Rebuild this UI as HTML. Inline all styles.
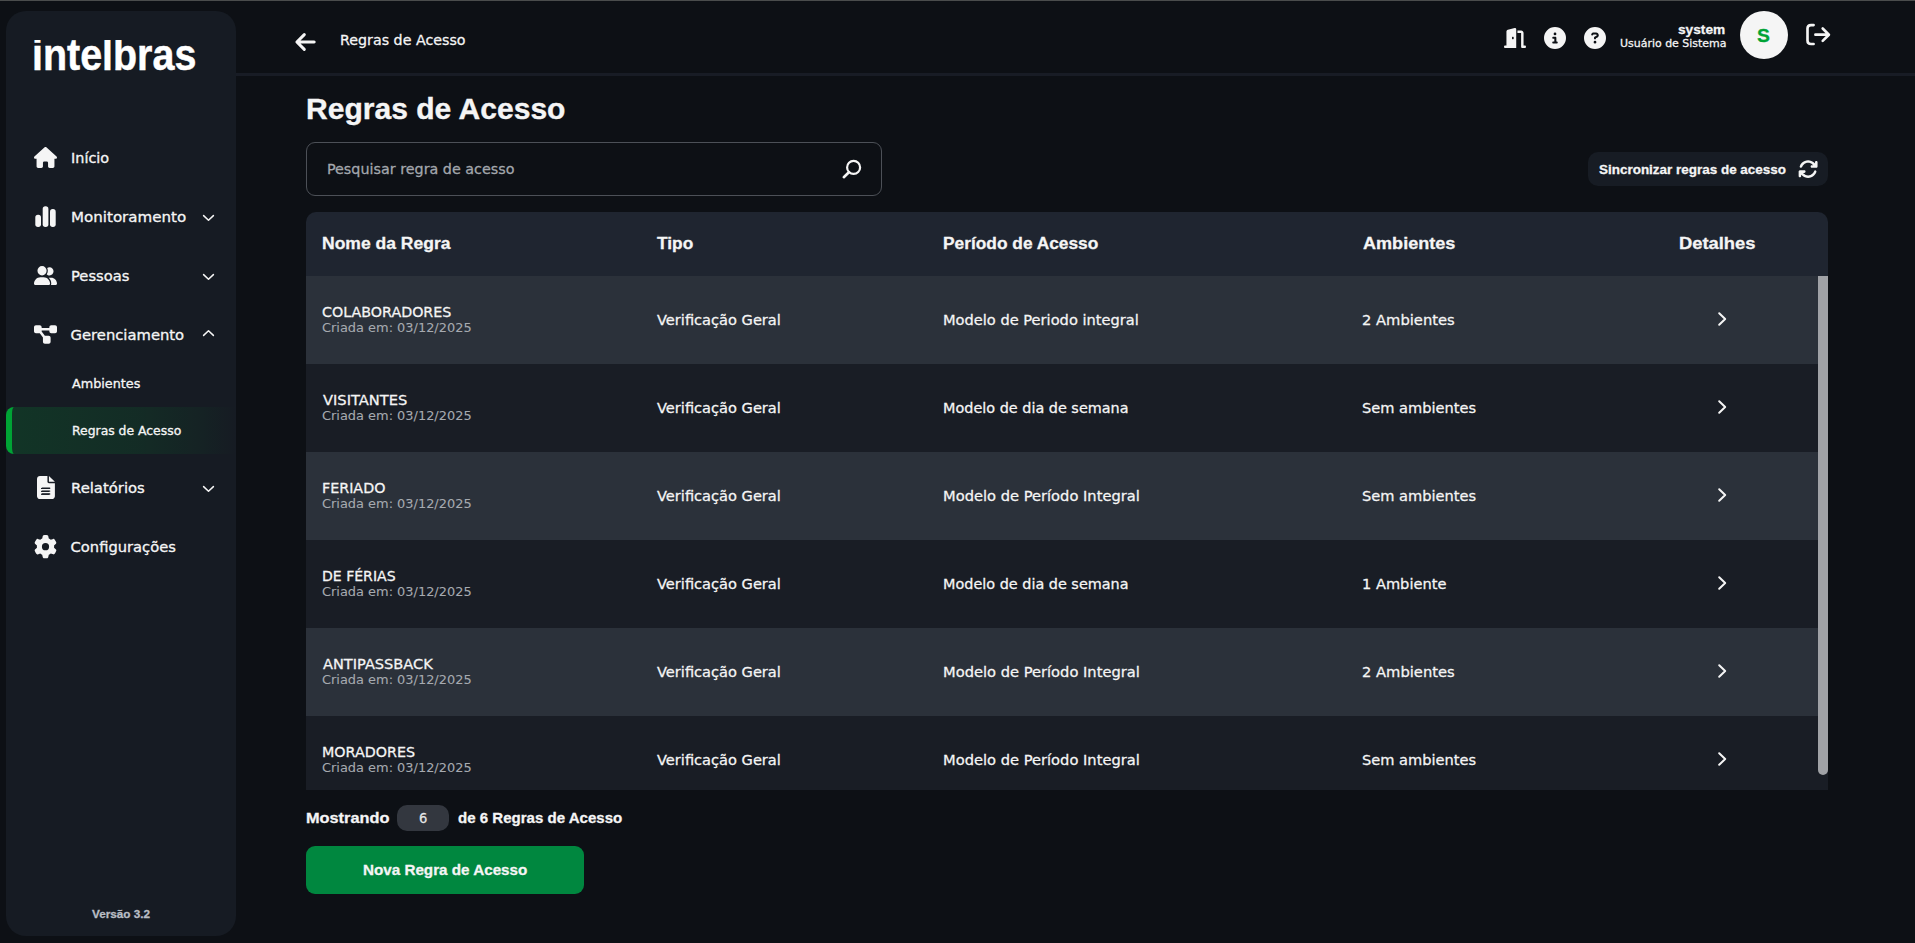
<!DOCTYPE html>
<html lang="pt-BR">
<head>
<meta charset="utf-8">
<title>Regras de Acesso</title>
<style>
html,body{margin:0;padding:0}
body{width:1915px;height:943px;overflow:hidden;background:#0d1015;color:#fff;position:relative;font-family:"DejaVu Sans","Liberation Sans",sans-serif}
.abs{position:absolute}
svg{position:absolute;overflow:visible}
#topline{left:0;top:0;width:1915px;height:1px;background:#4a4c4c}
#sidebar{left:6px;top:11px;width:230px;height:925px;border-radius:20px;background:#161b23}
#active{left:6px;top:407px;width:224px;height:47px;border-left:6px solid #00a335;border-radius:8px 0 0 8px;background:linear-gradient(90deg,rgba(0,163,53,.19) 0,rgba(0,163,53,.125) 55%,rgba(0,163,53,.055) 84%,rgba(0,163,53,0) 100%);background-clip:padding-box}
#hline{left:236px;top:73px;width:1679px;height:3px;background:#181c25}
#search{left:306px;top:142px;width:574px;height:52px;border:1px solid #4c5057;border-radius:9px}
#sync{left:1588px;top:152px;width:240px;height:34px;border-radius:10px;background:#171c24}
#thead{left:306px;top:212px;width:1522px;height:64px;background:#1f2530;border-radius:10px 10px 0 0}
.row{left:306px;width:1522px;height:88px}
.odd{background:#2b313a}
.even{background:#191d25}
#thumb{left:1818px;top:276px;width:10px;height:499px;background:#a0a2a6;border-radius:0 0 5px 5px}
#count{left:397px;top:805px;width:52px;height:26px;border-radius:10px;background:#33373f}
#btn{left:306px;top:846px;width:278px;height:48px;border-radius:9px;background:#00873f}
#avatar{left:1740px;top:11px;width:48px;height:48px;border-radius:50%;background:#f5f5f5}
.t{position:absolute;white-space:nowrap;line-height:1;margin:0;padding:0;font-weight:400;transform-origin:0 0}
.fd{font-family:"DejaVu Sans","Liberation Sans",sans-serif;-webkit-text-stroke:.27px currentColor}
.fl{font-family:"Liberation Sans",sans-serif;-webkit-text-stroke:.28px currentColor}
.m{-webkit-text-stroke:.32px currentColor}
</style>
</head>
<body>
<div id="topline" class="abs"></div>
<aside>
<div id="sidebar" class="abs"></div>
<div class="t fl" style="left:32.27px;top:32px;font-size:45px;font-weight:700;transform:scaleX(0.8760);-webkit-text-stroke:.5px currentColor;clip-path:inset(8px -5px -5px -5px);">intelbras</div>
<nav>
<div id="active" class="abs"></div>
<svg style="left:33.8px;top:146.8px" width="23" height="21" viewBox="0 0 576 512" preserveAspectRatio="none"><path fill="#f5f5f5" d="M575.8 255.5c0 18-15 32.1-32 32.1l-32 0 .7 160.2c0 2.700-.2 5.400-.5 8.100l0 16.200c0 22.100-17.900 40-40 40l-16 0c-1.100 0-2.200 0-3.300-.1c-1.400 .1-2.800 .1-4.200 .1L416 512l-24 0c-22.100 0-40-17.900-40-40l0-24 0-64c0-17.700-14.300-32-32-32l-64 0c-17.700 0-32 14.300-32 32l0 64 0 24c0 22.100-17.900 40-40 40l-24 0-31.900 0c-1.500 0-3-.1-4.500-.2c-1.200 .1-2.400 .2-3.600 .2l-16 0c-22.100 0-40-17.900-40-40l0-112c0-.9 0-1.900 .1-2.800l0-69.700-32 0c-18 0-32-14-32-32.100c0-9 3-17 10-24L266.400 8c7-7 15-8 22-8s15 2 21 7L564.800 231.500c8 7 12 15 11 24z"/></svg>
<svg style="left:35px;top:206px" width="21" height="21" viewBox="0 0 21 21" ><g fill="#f5f5f5"><rect x="0.300" y="8.700" width="5.700" height="12.200" rx="2.700"/><rect x="7.700" y="0.200" width="5.700" height="20.700" rx="2.700"/><rect x="15" y="3.100" width="5.700" height="17.800" rx="2.700"/></g></svg>
<svg style="left:33.8px;top:266px" width="23" height="18.9" viewBox="0 0 640 512" preserveAspectRatio="none"><path fill="#f5f5f5" d="M96 128a128 128 0 1 1 256 0A128 128 0 1 1 96 128zM0 482.300C0 383.800 79.800 304 178.300 304l91.400 0C368.200 304 448 383.800 448 482.300c0 16.400-13.300 29.700-29.700 29.700L29.700 512C13.300 512 0 498.700 0 482.300zM609.300 512l-137.800 0c5.400-9.400 8.600-20.300 8.600-32l0-8c0-60.700-27.100-115.200-69.800-151.800c2.400-.1 4.700-.2 7.100-.2l61.400 0C567.800 320 640 392.200 640 481.300c0 17-13.800 30.700-30.700 30.700zM432 256c-31 0-59-12.600-79.300-32.900C372.400 196.500 384 163.600 384 128c0-26.800-6.600-52.100-18.300-74.300C384.300 40.100 407.200 32 432 32c61.900 0 112 50.100 112 112s-50.100 112-112 112z"/></svg>
<svg style="left:33.8px;top:323.7px" width="23" height="21" viewBox="0 0 576 512" preserveAspectRatio="none"><path fill="#f5f5f5" d="M0 80C0 53.500 21.500 32 48 32l96 0c26.500 0 48 21.500 48 48l0 16 192 0 0-16c0-26.500 21.500-48 48-48l96 0c26.500 0 48 21.500 48 48l0 96c0 26.500-21.500 48-48 48l-96 0c-26.500 0-48-21.500-48-48l0-16-192 0 0 16c0 1.700-.1 3.400-.3 5L272 288l96 0c26.500 0 48 21.500 48 48l0 96c0 26.500-21.500 48-48 48l-96 0c-26.500 0-48-21.500-48-48l0-96c0-1.700 .1-3.400 .3-5L144 224l-96 0c-26.500 0-48-21.500-48-48L0 80z"/></svg>
<svg style="left:36.8px;top:476px" width="17.9" height="23" viewBox="0 0 384 512" preserveAspectRatio="none"><path fill="#f5f5f5" d="M64 0C28.700 0 0 28.700 0 64L0 448c0 35.300 28.700 64 64 64l256 0c35.300 0 64-28.700 64-64l0-288-128 0c-17.700 0-32-14.300-32-32L224 0 64 0zM256 0l0 128 128 0L256 0zM112 256l160 0c8.800 0 16 7.200 16 16s-7.200 16-16 16l-160 0c-8.800 0-16-7.200-16-16s7.200-16 16-16zm0 64l160 0c8.800 0 16 7.200 16 16s-7.200 16-16 16l-160 0c-8.800 0-16-7.200-16-16s7.200-16 16-16zm0 64l160 0c8.800 0 16 7.200 16 16s-7.200 16-16 16l-160 0c-8.800 0-16-7.200-16-16s7.200-16 16-16z"/></svg>
<div class="abs" style="left:41.400px;top:487.500px;width:8px;height:1.700px;background:#161b23;box-shadow:0 2.900px 0 #161b23,0 5.800px 0 #161b23"></div>
<svg style="left:34px;top:534.9px" width="23" height="23.3" viewBox="0 0 512 512" preserveAspectRatio="none"><path fill="#f5f5f5" d="M495.900 166.600c3.200 8.700 .5 18.400-6.400 24.600l-43.300 39.400c1.100 8.300 1.700 16.800 1.700 25.400s-.6 17.100-1.700 25.400l43.300 39.400c6.900 6.200 9.600 15.900 6.400 24.600c-4.400 11.900-9.700 23.300-15.800 34.300l-4.700 8.100c-6.600 11-14 21.400-22.100 31.200c-5.900 7.200-15.700 9.600-24.500 6.800l-55.700-17.700c-13.400 10.300-28.200 18.900-44 25.400l-12.500 57.100c-2 9.100-9 16.300-18.200 17.800c-13.800 2.300-28 3.500-42.500 3.500s-28.700-1.200-42.500-3.500c-9.200-1.500-16.200-8.700-18.200-17.800l-12.500-57.100c-15.800-6.500-30.600-15.100-44-25.400L83.100 425.900c-8.800 2.800-18.600 .3-24.500-6.800c-8.100-9.800-15.500-20.200-22.100-31.200l-4.700-8.100c-6.100-11-11.400-22.400-15.800-34.300c-3.200-8.700-.5-18.400 6.400-24.600l43.300-39.400C64.600 273.100 64 264.600 64 256s.6-17.100 1.700-25.400L22.400 191.200c-6.900-6.200-9.600-15.900-6.400-24.600c4.400-11.900 9.700-23.300 15.800-34.300l4.700-8.100c6.600-11 14-21.400 22.100-31.200c5.900-7.200 15.700-9.600 24.500-6.800l55.700 17.700c13.400-10.300 28.200-18.900 44-25.400l12.500-57.100c2-9.100 9-16.300 18.200-17.800C227.300 1.200 241.500 0 256 0s28.700 1.200 42.500 3.500c9.200 1.500 16.200 8.700 18.200 17.800l12.500 57.100c15.800 6.500 30.600 15.100 44 25.400l55.700-17.700c8.800-2.800 18.600-.3 24.500 6.800c8.100 9.800 15.500 20.200 22.100 31.200l4.700 8.100c6.100 11 11.400 22.400 15.800 34.300zM256 336a80 80 0 1 0 0-160 80 80 0 1 0 0 160z"/></svg>
<svg style="left:202.5px;top:215.1px" width="11" height="6" viewBox="0 0 11 6" ><path d="M0.600 0.600 L5.500 5.300 L10.400 0.600" fill="none" stroke="#f5f5f5" stroke-width="1.500" stroke-linecap="round" stroke-linejoin="round"/></svg>
<svg style="left:202.5px;top:274.1px" width="11" height="6" viewBox="0 0 11 6" ><path d="M0.600 0.600 L5.500 5.300 L10.400 0.600" fill="none" stroke="#f5f5f5" stroke-width="1.500" stroke-linecap="round" stroke-linejoin="round"/></svg>
<svg style="left:202.5px;top:330.4px" width="11" height="6" viewBox="0 0 11 6" ><path d="M0.600 5.400 L5.500 0.700 L10.400 5.400" fill="none" stroke="#f5f5f5" stroke-width="1.500" stroke-linecap="round" stroke-linejoin="round"/></svg>
<svg style="left:202.5px;top:485.9px" width="11" height="6" viewBox="0 0 11 6" ><path d="M0.600 0.600 L5.500 5.300 L10.400 0.600" fill="none" stroke="#f5f5f5" stroke-width="1.500" stroke-linecap="round" stroke-linejoin="round"/></svg>
<span class="t fd m" style="left:71.11px;top:151px;font-size:14.5px;color:#f5f5f5;transform:scaleX(0.9946);">Início</span>
<span class="t fd m" style="left:71.09px;top:210px;font-size:14.9px;color:#f5f5f5;transform:scaleX(1.0125);">Monitoramento</span>
<span class="t fd m" style="left:71.09px;top:269px;font-size:14.6px;color:#f5f5f5;transform:scaleX(1.0071);">Pessoas</span>
<span class="t fd m" style="left:70.60px;top:328px;font-size:14.75px;color:#f5f5f5;">Gerenciamento</span>
<span class="t fd m" style="left:72.10px;top:378px;font-size:12.9px;color:#f5f5f5;transform:scaleX(0.9913);">Ambientes</span>
<span class="t fd m" style="left:72.00px;top:425px;font-size:12.4px;color:#f5f5f5;">Regras de Acesso</span>
<span class="t fd m" style="left:71.10px;top:481px;font-size:14.75px;color:#f5f5f5;transform:scaleX(1.0042);">Relatórios</span>
<span class="t fd m" style="left:70.60px;top:540px;font-size:14.7px;color:#f5f5f5;">Configurações</span>
</nav>
<div class="t fl" style="left:92.20px;top:909px;font-size:11px;font-weight:700;color:#b9bdc4;transform:scaleX(1.0667);">Versão 3.2</div>
</aside>
<header>
<div id="hline" class="abs"></div>
<svg style="left:294.9px;top:32.8px" width="20.7" height="18" viewBox="0 0 20.7 18" ><path d="M9.300 1.600 L1.900 9 L9.300 16.400 M2.200 9 L19.200 9" fill="none" stroke="#f5f5f5" stroke-width="3" stroke-linecap="round" stroke-linejoin="round"/></svg>
<span class="t fd" style="left:340.10px;top:33px;font-size:14.18px;color:#f5f5f5;transform:scaleX(1.0049);">Regras de Acesso</span>
<svg style="left:1503.9px;top:27.8px" width="22" height="20" viewBox="0 0 576 512" preserveAspectRatio="none"><path fill="#f5f5f5" d="M320 32c0-9.900-4.500-19.200-12.300-25.200S289.800-1.400 280.200 1l-179.900 45C79 51.300 64 70.500 64 92.500L64 448l-32 0c-17.700 0-32 14.300-32 32s14.300 32 32 32l64 0 192 0 32 0 0-32 0-448zM256 256c0 17.700-10.700 32-24 32s-24-14.300-24-32s10.700-32 24-32s24 14.300 24 32zm96-128l96 0 0 352c0 17.700 14.300 32 32 32l64 0c17.700 0 32-14.300 32-32s-14.300-32-32-32l-32 0 0-320c0-35.300-28.700-64-64-64l-96 0 0 64z"/></svg>
<svg style="left:1544.1px;top:26.9px" width="22" height="22" viewBox="0 0 512 512" ><path fill="#f5f5f5" d="M256 512A256 256 0 1 0 256 0a256 256 0 1 0 0 512zM216 336l24 0 0-64-24 0c-13.300 0-24-10.700-24-24s10.700-24 24-24l48 0c13.300 0 24 10.700 24 24l0 88 8 0c13.300 0 24 10.700 24 24s-10.700 24-24 24l-80 0c-13.300 0-24-10.700-24-24s10.700-24 24-24zm40-208a32 32 0 1 1 0 64 32 32 0 1 1 0-64z"/></svg>
<svg style="left:1584px;top:26.9px" width="22" height="22" viewBox="0 0 512 512" ><path fill="#f5f5f5" d="M256 512A256 256 0 1 0 256 0a256 256 0 1 0 0 512zM169.800 165.300c7.900-22.300 29.100-37.300 52.800-37.300l58.300 0c34.900 0 63.100 28.300 63.100 63.100c0 22.600-12.100 43.500-31.700 54.800L280 264.400c-.2 13-10.900 23.600-24 23.600c-13.300 0-24-10.700-24-24l0-13.500c0-8.600 4.600-16.500 12.100-20.800l44.300-25.400c4.700-2.700 7.600-7.700 7.600-13.100c0-8.400-6.800-15.100-15.100-15.100l-58.300 0c-3.400 0-6.400 2.100-7.500 5.300l-.4 1.200c-4.400 12.500-18.200 19-30.600 14.600s-19-18.200-14.600-30.600l.4-1.200zM224 352a32 32 0 1 1 64 0 32 32 0 1 1 -64 0z"/></svg>
<span class="t fl" style="left:1678.30px;top:23px;font-size:13.4px;font-weight:700;color:#f5f5f5;transform:scaleX(1.0217);">system</span>
<span class="t fd" style="left:1619.59px;top:39px;font-size:10.9px;color:#f5f5f5;transform:scaleX(1.0067);">Usuário de Sistema</span>
<div id="avatar" class="abs"></div>
<span class="t fl" style="left:1757.48px;top:26px;font-size:19px;font-weight:700;color:#00a335;transform:scaleX(1.0182);">S</span>
<svg style="left:1806px;top:24.4px" width="24" height="21.3" viewBox="0 0 24 21.3" ><path d="M7.600 1.100 L5 1.100 Q1.500 1.100 1.500 4.600 L1.500 16.500 Q1.500 20 5 20 L7.600 20 M9.400 10.700 L22.300 10.700 M16.700 4.500 L22.900 10.700 L16.700 16.900" fill="none" stroke="#f5f5f5" stroke-width="2.650" stroke-linecap="round" stroke-linejoin="round"/></svg>
</header>
<main>
<h1 class="t fl" style="left:306.43px;top:95px;font-size:29px;font-weight:700;color:#f5f5f5;transform:scaleX(1.0363);-webkit-text-stroke:.35px currentColor;">Regras de Acesso</h1>
<div id="search" class="abs"></div>
<span class="t fd" style="left:326.90px;top:162px;font-size:14.34px;color:#a3a7ad;">Pesquisar regra de acesso</span>
<svg style="left:842px;top:159px" width="20" height="20" viewBox="0 0 20 20" ><circle cx="11.600" cy="8.400" r="6.500" fill="none" stroke="#f5f5f5" stroke-width="2.200"/><path d="M6.900 13.200 L1.800 18.200" stroke="#f5f5f5" stroke-width="2.600" stroke-linecap="round"/></svg>
<div id="sync" class="abs"></div>
<span class="t fl" style="left:1598.60px;top:164px;font-size:12.8px;font-weight:700;color:#f5f5f5;transform:scaleX(1.0517);">Sincronizar regras de acesso</span>
<svg style="left:1797.9px;top:158.9px" width="20.2" height="20.2" viewBox="0 0 512 512" ><path fill="#f5f5f5" d="M105.100 202.600c7.700-21.800 20.200-42.300 37.800-59.800c62.500-62.500 163.800-62.500 226.300 0L386.300 160 352 160c-17.700 0-32 14.300-32 32s14.300 32 32 32l111.500 0c0 0 0 0 0 0l.4 0c17.700 0 32-14.300 32-32l0-112c0-17.700-14.300-32-32-32s-32 14.300-32 32l0 35.200L414.400 97.600c-87.500-87.500-229.300-87.500-316.800 0C73.200 122 55.600 150.700 44.800 181.400c-5.900 16.700 2.900 34.900 19.500 40.800s34.900-2.900 40.800-19.500zM39 289.300c-5 1.500-9.800 4.200-13.700 8.200c-4 4-6.700 8.800-8.100 14c-.3 1.200-.6 2.500-.8 3.800c-.3 1.700-.4 3.400-.4 5.100L16 432c0 17.700 14.300 32 32 32s32-14.300 32-32l0-35.100 17.600 17.500c0 0 0 0 0 0c87.500 87.400 229.300 87.400 316.700 0c24.400-24.400 42.100-53.100 52.900-83.800c5.900-16.700-2.900-34.900-19.500-40.800s-34.900 2.900-40.800 19.500c-7.700 21.800-20.200 42.300-37.800 59.800c-62.500 62.500-163.800 62.500-226.300 0l-.1-.1L125.600 352l34.400 0c17.700 0 32-14.300 32-32s-14.300-32-32-32L48.400 288c-1.600 0-3.200 .1-4.800 .3s-3.100 .5-4.600 1z"/></svg>
<section role="table">
<div role="row">
<div id="thead" class="abs"></div>
<span class="t fl" style="left:321.86px;top:236px;font-size:16.8px;font-weight:700;color:#f5f5f5;transform:scaleX(1.0434);">Nome da Regra</span>
<span class="t fl" style="left:657.30px;top:236px;font-size:16.8px;font-weight:700;color:#f5f5f5;transform:scaleX(1.0314);">Tipo</span>
<span class="t fl" style="left:942.97px;top:236px;font-size:16.8px;font-weight:700;color:#f5f5f5;transform:scaleX(1.0322);">Período de Acesso</span>
<span class="t fl" style="left:1363.00px;top:236px;font-size:16.8px;font-weight:700;color:#f5f5f5;transform:scaleX(1.0765);">Ambientes</span>
<span class="t fl" style="left:1679.21px;top:236px;font-size:16.8px;font-weight:700;color:#f5f5f5;transform:scaleX(1.0926);">Detalhes</span>
</div>
<div role="row">
<div class="abs row odd" style="top:276px;height:88px"></div>
<span class="t fd" style="left:321.89px;top:305px;font-size:14.2px;color:#f5f5f5;transform:scaleX(1.0063);">COLABORADORES</span>
<span class="t fd" style="left:321.89px;top:322px;font-size:12.87px;color:#a6aab0;transform:scaleX(1.0054);-webkit-text-stroke:.08px currentColor;">Criada em: 03/12/2025</span>
<span class="t fd" style="left:657.00px;top:313px;font-size:14.6px;color:#f5f5f5;">Verificação Geral</span>
<span class="t fd" style="left:943.00px;top:313px;font-size:14.55px;color:#f5f5f5;transform:scaleX(1.0041);">Modelo de Periodo integral</span>
<span class="t fd" style="left:1361.99px;top:313px;font-size:14.6px;color:#f5f5f5;transform:scaleX(1.0078);">2 Ambientes</span>
<svg style="left:1717.8px;top:311.9px" width="8.4" height="14" viewBox="0 0 8.4 14" ><path d="M1.200 1.200 L7.200 7 L1.200 12.800" fill="none" stroke="#f5f5f5" stroke-width="2" stroke-linecap="round" stroke-linejoin="round"/></svg>
</div>
<div role="row">
<div class="abs row even" style="top:364px;height:88px"></div>
<span class="t fd" style="left:322.90px;top:393px;font-size:14.2px;color:#f5f5f5;transform:scaleX(1.0333);">VISITANTES</span>
<span class="t fd" style="left:321.89px;top:410px;font-size:12.87px;color:#a6aab0;transform:scaleX(1.0054);-webkit-text-stroke:.08px currentColor;">Criada em: 03/12/2025</span>
<span class="t fd" style="left:657.00px;top:401px;font-size:14.6px;color:#f5f5f5;">Verificação Geral</span>
<span class="t fd" style="left:943.01px;top:401px;font-size:14.55px;color:#f5f5f5;transform:scaleX(0.9903);">Modelo de dia de semana</span>
<span class="t fd" style="left:1362.00px;top:401px;font-size:14.6px;color:#f5f5f5;">Sem ambientes</span>
<svg style="left:1717.8px;top:399.9px" width="8.4" height="14" viewBox="0 0 8.4 14" ><path d="M1.200 1.200 L7.200 7 L1.200 12.800" fill="none" stroke="#f5f5f5" stroke-width="2" stroke-linecap="round" stroke-linejoin="round"/></svg>
</div>
<div role="row">
<div class="abs row odd" style="top:452px;height:88px"></div>
<span class="t fd" style="left:322.49px;top:481px;font-size:14.2px;color:#f5f5f5;transform:scaleX(1.0066);">FERIADO</span>
<span class="t fd" style="left:321.89px;top:498px;font-size:12.87px;color:#a6aab0;transform:scaleX(1.0054);-webkit-text-stroke:.08px currentColor;">Criada em: 03/12/2025</span>
<span class="t fd" style="left:657.00px;top:489px;font-size:14.6px;color:#f5f5f5;">Verificação Geral</span>
<span class="t fd" style="left:942.99px;top:489px;font-size:14.55px;color:#f5f5f5;transform:scaleX(1.0083);">Modelo de Período Integral</span>
<span class="t fd" style="left:1362.00px;top:489px;font-size:14.6px;color:#f5f5f5;">Sem ambientes</span>
<svg style="left:1717.8px;top:487.9px" width="8.4" height="14" viewBox="0 0 8.4 14" ><path d="M1.200 1.200 L7.200 7 L1.200 12.800" fill="none" stroke="#f5f5f5" stroke-width="2" stroke-linecap="round" stroke-linejoin="round"/></svg>
</div>
<div role="row">
<div class="abs row even" style="top:540px;height:88px"></div>
<span class="t fd" style="left:321.91px;top:569px;font-size:14.2px;color:#f5f5f5;transform:scaleX(0.9904);">DE FÉRIAS</span>
<span class="t fd" style="left:321.89px;top:586px;font-size:12.87px;color:#a6aab0;transform:scaleX(1.0054);-webkit-text-stroke:.08px currentColor;">Criada em: 03/12/2025</span>
<span class="t fd" style="left:657.00px;top:577px;font-size:14.6px;color:#f5f5f5;">Verificação Geral</span>
<span class="t fd" style="left:943.01px;top:577px;font-size:14.55px;color:#f5f5f5;transform:scaleX(0.9903);">Modelo de dia de semana</span>
<span class="t fd" style="left:1362.00px;top:577px;font-size:14.6px;color:#f5f5f5;">1 Ambiente</span>
<svg style="left:1717.8px;top:575.9px" width="8.4" height="14" viewBox="0 0 8.4 14" ><path d="M1.200 1.200 L7.200 7 L1.200 12.800" fill="none" stroke="#f5f5f5" stroke-width="2" stroke-linecap="round" stroke-linejoin="round"/></svg>
</div>
<div role="row">
<div class="abs row odd" style="top:628px;height:88px"></div>
<span class="t fd" style="left:322.90px;top:657px;font-size:14.2px;color:#f5f5f5;transform:scaleX(1.0262);">ANTIPASSBACK</span>
<span class="t fd" style="left:321.89px;top:674px;font-size:12.87px;color:#a6aab0;transform:scaleX(1.0054);-webkit-text-stroke:.08px currentColor;">Criada em: 03/12/2025</span>
<span class="t fd" style="left:657.00px;top:665px;font-size:14.6px;color:#f5f5f5;">Verificação Geral</span>
<span class="t fd" style="left:942.99px;top:665px;font-size:14.55px;color:#f5f5f5;transform:scaleX(1.0083);">Modelo de Período Integral</span>
<span class="t fd" style="left:1361.99px;top:665px;font-size:14.6px;color:#f5f5f5;transform:scaleX(1.0078);">2 Ambientes</span>
<svg style="left:1717.8px;top:663.9px" width="8.4" height="14" viewBox="0 0 8.4 14" ><path d="M1.200 1.200 L7.200 7 L1.200 12.800" fill="none" stroke="#f5f5f5" stroke-width="2" stroke-linecap="round" stroke-linejoin="round"/></svg>
</div>
<div role="row">
<div class="abs row even" style="top:716px;height:74px"></div>
<span class="t fd" style="left:321.89px;top:745px;font-size:14.2px;color:#f5f5f5;transform:scaleX(1.0077);">MORADORES</span>
<span class="t fd" style="left:321.89px;top:762px;font-size:12.87px;color:#a6aab0;transform:scaleX(1.0054);-webkit-text-stroke:.08px currentColor;">Criada em: 03/12/2025</span>
<span class="t fd" style="left:657.00px;top:753px;font-size:14.6px;color:#f5f5f5;">Verificação Geral</span>
<span class="t fd" style="left:942.99px;top:753px;font-size:14.55px;color:#f5f5f5;transform:scaleX(1.0083);">Modelo de Período Integral</span>
<span class="t fd" style="left:1362.00px;top:753px;font-size:14.6px;color:#f5f5f5;">Sem ambientes</span>
<svg style="left:1717.8px;top:751.9px" width="8.4" height="14" viewBox="0 0 8.4 14" ><path d="M1.200 1.200 L7.200 7 L1.200 12.800" fill="none" stroke="#f5f5f5" stroke-width="2" stroke-linecap="round" stroke-linejoin="round"/></svg>
</div>
<div id="thumb" class="abs"></div>
</section>
<span class="t fl" style="left:305.77px;top:811px;font-size:14.4px;font-weight:700;color:#f5f5f5;transform:scaleX(1.1333);">Mostrando</span>
<div id="count" class="abs"></div>
<span class="t fd" style="left:418.60px;top:811px;font-size:14.5px;color:#e6e6e6;transform:scaleX(0.9000);">6</span>
<span class="t fl" style="left:458.30px;top:811px;font-size:14.4px;font-weight:700;color:#f5f5f5;transform:scaleX(1.0459);">de 6 Regras de Acesso</span>
<div id="btn" class="abs"></div>
<span class="t fl" style="left:362.64px;top:863px;font-size:14.4px;font-weight:700;color:#f5f5f5;transform:scaleX(1.0571);">Nova Regra de Acesso</span>
</main>
</body>
</html>
